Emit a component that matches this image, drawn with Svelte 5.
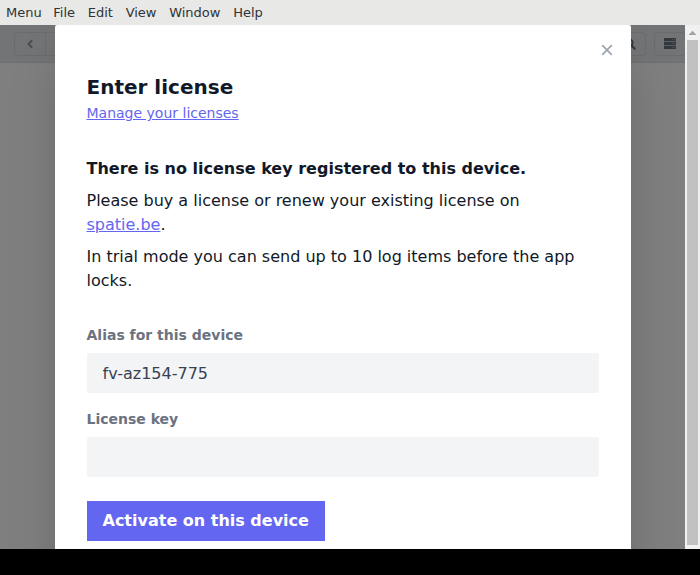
<script>
  const menu = ['Menu', 'File', 'Edit', 'View', 'Window', 'Help'];
  let alias = $state('fv-az154-775');
  let key = $state('');
</script>

<div class="window">
  <nav class="menubar">
    {#each menu as item}<span>{item}</span>{/each}
  </nav>
  <div class="view">
    <div class="stage">
      <header class="toolbar">
        <div class="group">
          <button aria-label="Back"><svg width="7" height="10" viewBox="0 0 7 10"><path d="M5.2 1.2 1.5 5l3.7 3.8" /></svg></button>
          <button aria-label="Forward"></button>
        </div>
        <div class="tools">
          <div class="tool search">
            <svg width="12" height="12" viewBox="0 0 12 12"><circle cx="4.8" cy="4.8" r="3.8" /><path d="M7.5 7.5 11.2 11.2" /></svg>
          </div>
          <div class="tool rows">
            <svg width="12" height="11" viewBox="0 0 12 11"><path class="gaps" d="M0 2h12v7H0z" /><path d="M.5 0h11l.5.5v2l-.5.5H.5L0 2.5v-2zM.5 4h11l.5.5v2l-.5.5H.5L0 6.5v-2zM.5 8h11l.5.5v2l-.5.5H.5L0 10.5v-2z" /><path class="dots" d="M8 1h1v1H8zM10 1h1v1h-1zM8 5h1v1H8zM10 5h1v1h-1zM8 9h1v1H8zM10 9h1v1h-1z" /></svg>
          </div>
        </div>
      </header>
      <div class="overlay">
        <section class="modal">
          <button class="close" aria-label="Close"><svg width="12" height="12" viewBox="0 0 12 12"><path d="M1.2 1.2l9.6 9.6M10.8 1.2l-9.6 9.6" /></svg></button>
          <h1>Enter license</h1>
          <div class="manage"><a href="#licenses">Manage your licenses</a></div>
          <div class="message">
            <p><strong>There is no license key registered to this device.</strong></p>
            <p>Please buy a license or renew your existing license on <a href="#spatie">spatie.be</a>.</p>
            <p>In trial mode you can send up to 10 log items before the app locks.</p>
          </div>
          <label for="alias">Alias for this device</label>
          <input id="alias" bind:value={alias} />
          <label for="key">License key</label>
          <input id="key" bind:value={key} />
          <button class="activate">Activate on this device</button>
        </section>
      </div>
    </div>
    <div class="scrollbar">
      <svg width="15" height="15" viewBox="0 0 15 15"><path d="M3.5 10h8l-4-4.300z" /></svg>
      <div class="thumb"></div>
    </div>
  </div>
</div>

<style>
  :global(body) { margin: 0; background: #000; overflow: hidden; }
  .window { width: 700px; height: 575px; background: #000; font-family: "DejaVu Sans", sans-serif; color: #111827; overflow: hidden; }
  .menubar { height: 25px; background: #e8e8e6; display: flex; gap: 12.7px; padding-left: 6px; font-size: 13px; line-height: 25px; color: #2e3436; }
  .menubar span:first-child { margin-right: -1.1px; }
  .view { height: 524px; display: flex; overflow: hidden; }
  .stage { position: relative; width: 685px; background: #fff; overflow: hidden; }
  .toolbar { box-sizing: border-box; height: 38px; background: #e7e9ed; border-bottom: 1px solid #dcdee2; display: flex; justify-content: space-between; align-items: center; padding-left: 14px; }
  button { border: 0; background: none; padding: 0; font: inherit; }
  svg { display: block; }
  .group { display: flex; }
  .group button { box-sizing: border-box; width: 32px; height: 24px; border: 1px solid #d5d7dc; border-radius: 4px 0 0 4px; display: flex; align-items: center; justify-content: center; }
  .group button + button { border-left: 0; border-radius: 0 4px 4px 0; }
  .group path { fill: none; stroke: #959aa2; stroke-width: 2; }
  .tools { display: flex; gap: 8px; margin-right: -1px; }
  .tool { box-sizing: border-box; height: 24px; width: 32px; border: 1px solid #d5d7dc; border-radius: 4px; display: flex; align-items: center; justify-content: center; }
  .search svg { fill: none; stroke: #67707c; stroke-width: 2; }
  .rows { fill: #67707c; }
  .gaps { fill: #b8bdc5; }
  .dots { fill: #a3a9b2; }
  .overlay { position: absolute; inset: 0; background: rgba(0, 0, 0, .5); display: flex; justify-content: center; align-items: flex-start; }
  .modal { position: relative; box-sizing: border-box; width: 576px; height: 580px; padding: 48px 32px; background: #fff; border-radius: 2px; box-shadow: 0 25px 50px -12px rgba(0, 0, 0, .25); font-size: 16px; line-height: 24px; }
  .close { position: absolute; top: 19px; right: 18px; }
  .close path { fill: none; stroke: #9ca3af; stroke-width: 1.7; }
  h1 { margin: 0; font-size: 20px; line-height: 28px; font-weight: 700; }
  .manage { font-size: 14px; line-height: 24px; }
  a { color: #6366f1; text-decoration: underline; }
  .message { margin: 32px 0; }
  p { margin: 0 0 8px; }
  p:last-child { margin-bottom: 0; }
  label { display: block; font-size: 14px; line-height: 20px; font-weight: 700; color: #6b7280; margin-bottom: 8px; }
  input { display: block; box-sizing: border-box; width: 100%; height: 40px; margin: 0 0 16px; padding: 0 16px; border: 0; border-radius: 2px; background: #f3f4f6; font: inherit; color: #374151; outline: 0; }
  .activate { display: block; height: 40px; margin-top: 24px; padding: 0 16px; background: #6366f1; color: #fff; font-weight: 700; }
  .scrollbar { width: 15px; background: #f1f1f1; }
  .scrollbar path { fill: #a3a3a3; }
  .thumb { width: 11px; height: 505px; margin: 0 auto; background: #c1c1c1; }
</style>
